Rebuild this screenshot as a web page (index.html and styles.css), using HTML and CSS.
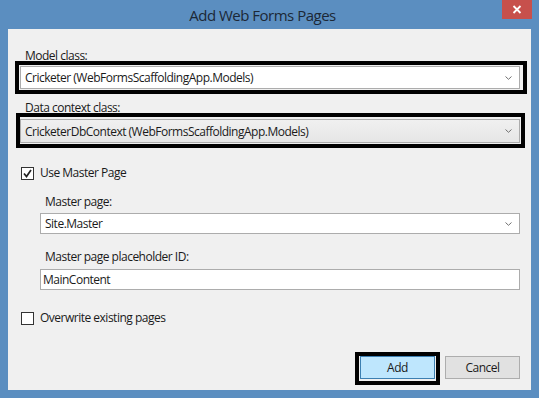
FILE: index.html
```html
<!DOCTYPE html>
<html>
<head>
<meta charset="utf-8">
<link rel="stylesheet" href="styles.css">
</head>
<body>
<div class="window">
  <div class="titlebar">
    <div class="title">Add Web Forms Pages</div>
    <div class="close">
      <svg width="10" height="9" viewBox="0 0 10 9"><path d="M1.5 1 L8.5 8 M8.5 1 L1.5 8" stroke="#fff" stroke-width="1.8" fill="none"/></svg>
    </div>
  </div>
  <div class="client">
    <div class="label l1">Model class:</div>
    <div class="combo c1 marked m1">
      <span>Cricketer (WebFormsScaffoldingApp.Models)</span>
      <svg class="chev" width="7" height="4" viewBox="0 0 7 4"><path d="M0.5 0.5 L3.5 3.3 L6.5 0.5" stroke="#707070" stroke-width="1" fill="none"/></svg>
    </div>
    <div class="label l2">Data context class:</div>
    <div class="combo c2 readonly marked m2">
      <span>CricketerDbContext (WebFormsScaffoldingApp.Models)</span>
      <svg class="chev" width="7" height="4" viewBox="0 0 7 4"><path d="M0.5 0.5 L3.5 3.3 L6.5 0.5" stroke="#707070" stroke-width="1" fill="none"/></svg>
    </div>
    <div class="check r1">
      <span class="box">
        <svg width="11" height="11" viewBox="0 0 11 11"><path d="M2 5.5 L4.5 8.5 L9 2" stroke="#222" stroke-width="1.7" fill="none"/></svg>
      </span>
      <span>Use Master Page</span>
    </div>
    <div class="indent">
      <div class="label l3">Master page:</div>
      <div class="combo c3">
        <span>Site.Master</span>
        <svg class="chev" width="7" height="4" viewBox="0 0 7 4"><path d="M0.5 0.5 L3.5 3.3 L6.5 0.5" stroke="#707070" stroke-width="1" fill="none"/></svg>
      </div>
      <div class="label l4">Master page placeholder ID:</div>
      <div class="textbox">MainContent</div>
    </div>
    <div class="check r2">
      <span class="box"></span>
      <span>Overwrite existing pages</span>
    </div>
    <div class="buttons">
      <div class="btn primary marked m3">Add</div>
      <div class="btn">Cancel</div>
    </div>
  </div>
</div>
</body>
</html>
```
FILE: styles.css
```css
html, body {
  margin: 0;
  padding: 0;
}
body {
  width: 539px;
  height: 398px;
  background: #5b8ec0;
  font-family: "Open Sans", "Noto Sans", sans-serif;
  font-size: 12px;
  color: #1a1a1a;
  overflow: hidden;
}
.window {
  display: flex;
  flex-direction: column;
  height: 398px;
}
.titlebar {
  height: 29px;
  position: relative;
  display: flex;
  justify-content: center;
  align-items: center;
}
.title {
  font-size: 15px;
  color: #1c2836;
  margin-right: 14px;
  margin-top: 1px;
  letter-spacing: -0.5px;
}
.close {
  position: absolute;
  right: 7px;
  top: 0;
  width: 30px;
  height: 19px;
  background: #c7504c;
  display: flex;
  align-items: center;
  justify-content: center;
}
.client {
  margin: 0 8px 8px 8px;
  background: #f0f0f0;
  flex: 1;
  display: flex;
  flex-direction: column;
  padding: 19px 11px 11px 12px;
  letter-spacing: -0.5px;
}
.label {
  line-height: 16px;
  height: 16px;
  padding-left: 5px;
}
.l1 { margin-bottom: 2px; }
.l2 { margin-top: 11px; margin-bottom: 3px; }
.combo {
  height: 23px;
  box-sizing: border-box;
  border: 1px solid #acacac;
  background: #fff;
  display: flex;
  align-items: center;
  justify-content: space-between;
  padding: 0 7px 0 4px;
}
.combo.readonly {
  background: linear-gradient(#f0f0f0, #e6e6e6);
}
.combo.c2 { height: 24px; }
.combo.c3 { height: 21px; padding-left: 4px; }
.marked {
  position: relative;
}
.marked::after {
  content: "";
  position: absolute;
  border: 4px solid #000;
  pointer-events: none;
}
.m1::after { left: -6px; right: -8px; top: -6px; bottom: -6px; }
.m2::after { left: -5px; right: -6px; top: -7px; bottom: -6px; }
.m3::after { left: -6px; right: -6px; top: -5px; bottom: -7px; }
.check {
  display: flex;
  align-items: center;
  gap: 6px;
  height: 16px;
  line-height: 16px;
  padding-left: 1px;
}
.check .box {
  width: 13px;
  height: 13px;
  box-sizing: border-box;
  border: 1px solid #333;
  background: #fff;
  display: flex;
  align-items: center;
  justify-content: center;
}
.r1 { margin-top: 22px; }
.r2 { margin-top: 20px; }
.indent {
  margin-left: 20px;
}
.l3 { margin-top: 13px; margin-bottom: 3px; }
.l4 { margin-top: 15px; margin-bottom: 4px; }
.textbox {
  height: 21px;
  box-sizing: border-box;
  border: 1px solid #acacac;
  background: #fff;
  line-height: 19px;
  padding-left: 2px;
}
.buttons {
  margin-top: auto;
  display: flex;
  justify-content: flex-end;
  gap: 10px;
}
.btn {
  width: 75px;
  height: 23px;
  box-sizing: border-box;
  border: 1px solid #adadad;
  background: #e1e1e1;
  display: flex;
  align-items: center;
  justify-content: center;
}
.btn.primary {
  background: #bee6fd;
  border-color: #3c7fb1;
}
```
